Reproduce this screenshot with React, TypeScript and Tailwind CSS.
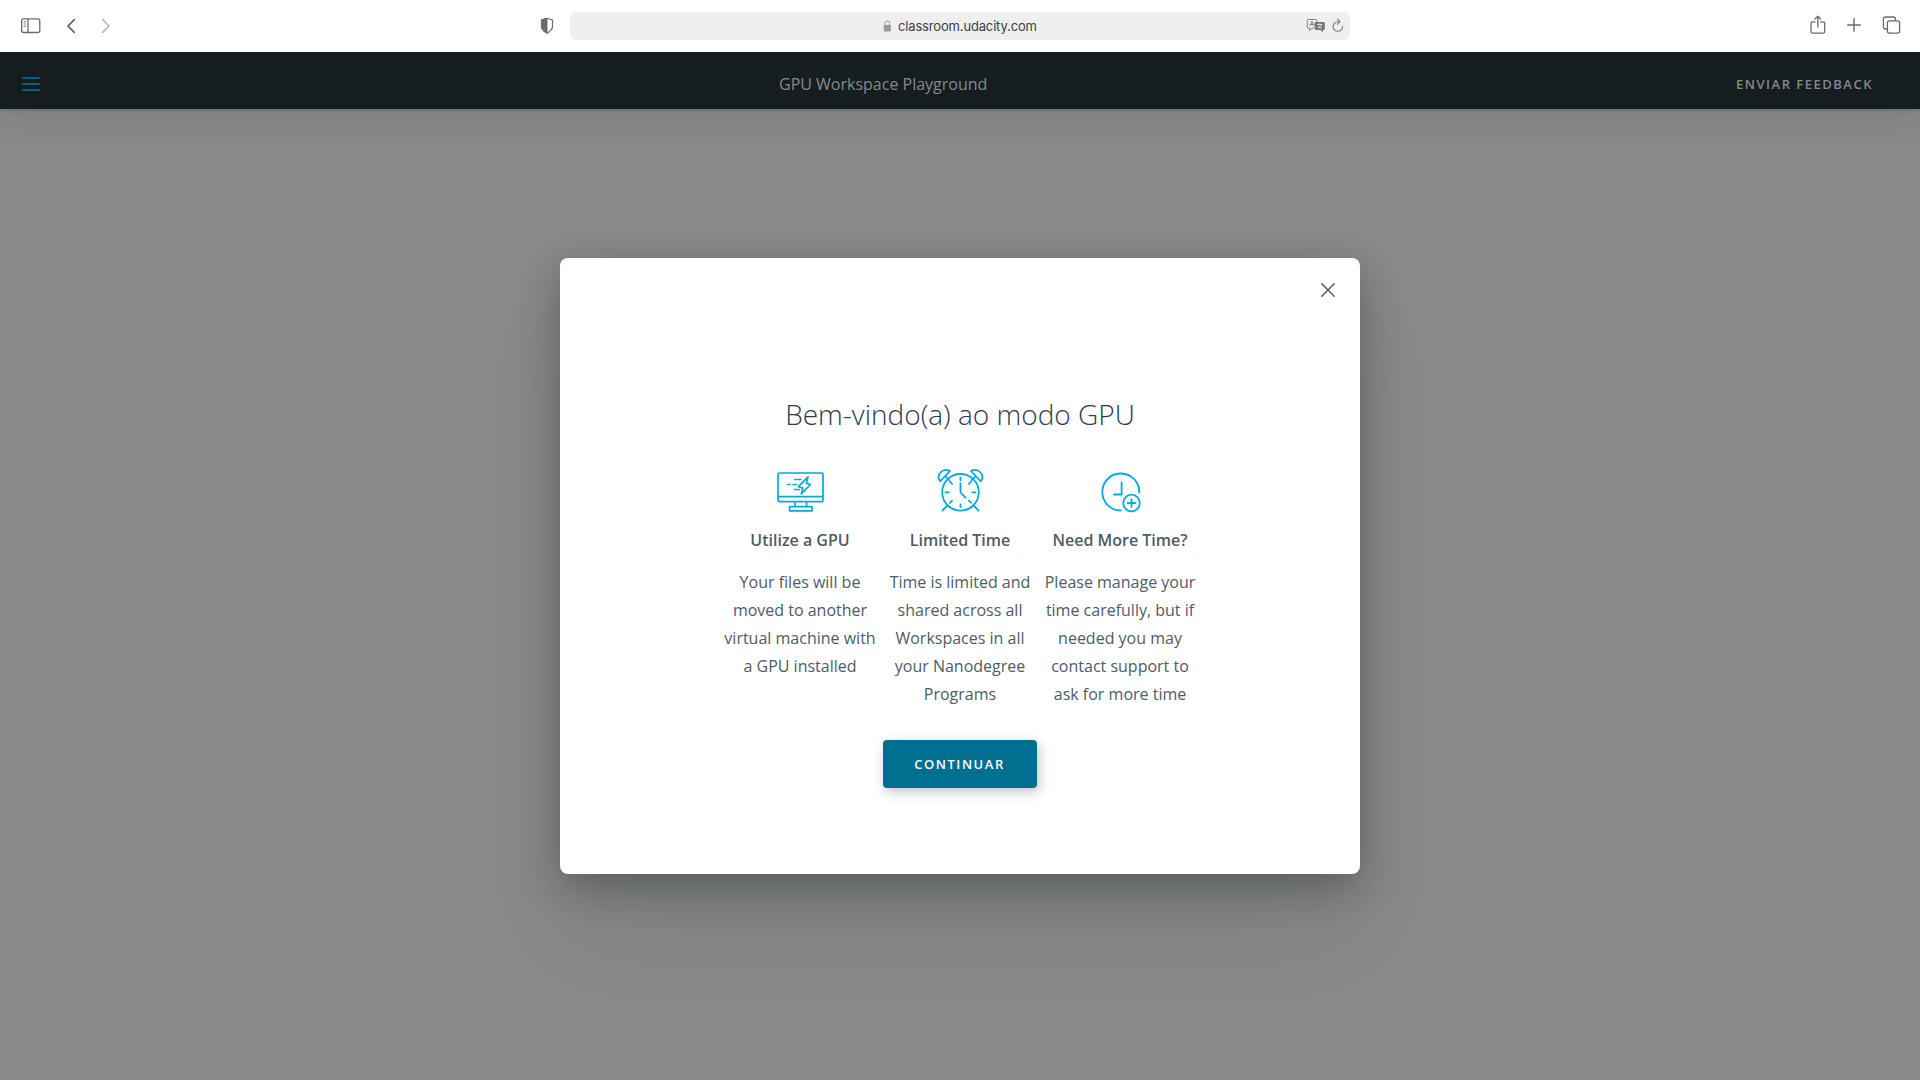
import React from "react";

const ink = "#6b6b6b";

function BrowserBar() {
  return (
    <div className="relative z-10 flex h-[52px] items-center bg-white">
      <div className="flex w-[570px] items-center">
        <svg className="ml-[21px] shrink-0" width="20" height="16" viewBox="0 0 20 16" fill="none" stroke={ink} strokeWidth="1.3">
          <rect x="0.6" y="0.8" width="18.2" height="13.7" rx="1.8" />
          <path d="M7 1v13.5" />
          <path d="M2.6 3.7h2.6M2.6 6h2.6M2.6 8.3h2.6" strokeWidth="0.9" />
        </svg>
        <svg className="ml-[25px] shrink-0" width="10" height="16" viewBox="0 0 10 16" fill="none" stroke="#5c5c5c" strokeWidth="1.6" strokeLinecap="round" strokeLinejoin="round">
          <path d="M8.3 1.6 2 8l6.3 6.4" />
        </svg>
        <svg className="ml-[25px] shrink-0" width="10" height="16" viewBox="0 0 10 16" fill="none" stroke="#b5b5b5" strokeWidth="1.6" strokeLinecap="round" strokeLinejoin="round">
          <path d="M1.7 1.6 8 8l-6.3 6.4" />
        </svg>
        <svg className="ml-auto mr-[16px] shrink-0" width="14" height="18" viewBox="0 0 14 18">
          <path d="M7 1.3 12.500 3v6.500c0 2.900-2.500 5-5.500 6.700C4 14.500 1.500 12.400 1.500 9.500V3z" fill="none" stroke={ink} strokeWidth="1.2" strokeLinejoin="round" />
          <path d="M7 1.300 1.500 3v6.500c0 2.900 2.500 5 5.500 6.700z" fill={ink} stroke={ink} strokeLinejoin="round" />
        </svg>
      </div>
      <div className="flex h-7 w-[780px] items-center rounded-md bg-[#efefef]">
        <div className="flex flex-1 items-center">
          <svg className="ml-[313px]" width="9" height="12" viewBox="0 0 9 12">
            <path d="M2 5.500V3.400a2.400 2.400 0 0 1 4.800 0v2.100" fill="none" stroke="#9a9a9a" strokeWidth="1" />
            <rect x="0.7" y="5" width="7.2" height="6.5" rx="0.9" fill="#9a9a9a" />
          </svg>
          <span className="-mt-px ml-[6px] font-['Inter'] text-[13px] leading-4 tracking-[-0.16px] text-[#404040]">classroom.udacity.com</span>
        </div>
        <svg className="mr-[6px] -mt-px shrink-0" width="20" height="16" viewBox="0 0 20 16">
          <path d="M2.400 1.500h7.200q1.200 0 1.200 1.200v2.300M8 10.200H6L3.700 12.500v-2.300H2.400q-1.200 0-1.200-1.200V2.700q0-1.200 1.200-1.200" fill="none" stroke="#7d7d7d" strokeWidth="1" />
          <path d="M3.700 8 6 3.200 8.200 8M4.500 6.500h3" fill="none" stroke="#7d7d7d" strokeWidth="1" />
          <path d="M10 4h7.500q1.300 0 1.300 1.300v5.400q0 1.300-1.300 1.300h-.6v2.500L14.500 12H10q-1.300 0-1.300-1.300V5.300Q8.700 4 10 4" fill="#757575" />
          <path d="M11.300 6.500h5M13.700 5.200v1.300M15.500 6.600c-.7 2-2.300 3.300-3.900 3.700M12.200 7.500c.9 1.600 2.300 2.600 3.800 2.800" fill="none" stroke="#efefef" strokeWidth="0.8" />
        </svg>
        <svg className="mr-[6px] -mt-[2px] shrink-0" width="12" height="15" viewBox="0 0 12 15" fill="none" stroke="#7d7d7d" strokeWidth="1.1" strokeLinecap="round" strokeLinejoin="round">
          <path d="M7.500 3.700H5.800a4.800 4.800 0 1 0 4.900 4.800M5.500 1.200l2.500 2.500-2.500 2.500" />
        </svg>
      </div>
      <div className="-mt-[2px] ml-auto mr-[19px] flex items-center">
        <svg width="16" height="20" viewBox="0 0 16 20" fill="none" stroke={ink} strokeWidth="1.3" strokeLinecap="round" strokeLinejoin="round">
          <path d="M5 6.800H2.500Q1 6.800 1 8.300v8.400q0 1.500 1.500 1.500h10.700q1.500 0 1.500-1.500V8.300q0-1.500-1.500-1.500H10.700M7.850 12V1.500M5 4l2.850-2.700L10.700 4" />
        </svg>
        <svg className="ml-[21px]" width="14" height="14" viewBox="0 0 14 14" stroke={ink} strokeWidth="1.4" strokeLinecap="round">
          <path d="M7 .7v12.600M.7 7h12.600" />
        </svg>
        <svg className="ml-[21px]" width="19" height="18" viewBox="0 0 19 18" fill="none" stroke={ink} strokeWidth="1.3" strokeLinejoin="round">
          <rect x="5.400" y="4.900" width="12.200" height="12.200" rx="2" />
          <path d="M5.200 13H3.400q-2 0-2-2V3q0-2 2-2h8q2 0 2 2v1.600" />
        </svg>
      </div>
    </div>
  );
}

function MonitorIcon() {
  return (
    <svg width="48" height="48" viewBox="0 0 48 48" fill="none" stroke="#02abdd" strokeWidth="1.7" strokeLinejoin="round">
      <rect x="2" y="5" width="45" height="28.7" rx="1.5" />
      <path d="M2 28.700H47M19 34v5M30.500 34v5M13.600 38.700h22.400v4.100H13.600z" />
      <path d="M32 8.800 22.500 18.600l4.300 1.500-1.500 5.700 9.200-9.300-4.100-1.300z" />
      <path d="M18.800 11.500h6M11.500 16.500h2.500M17 16.500h3.500M18.800 21.500h4.500" strokeLinecap="round" />
    </svg>
  );
}

function AlarmIcon() {
  return (
    <svg width="48" height="48" viewBox="0 0 48 48" fill="none" stroke="#02abdd" strokeWidth="1.8" strokeLinejoin="round" strokeLinecap="round">
      <circle cx="24.500" cy="24.300" r="18.300" />
      <path d="M4.200 13.300C-.5 7.500 6.500-1 14 3L4.200 13.300M44.800 13.300C49.500 7.500 42.500-1 35 3L44.800 13.300M9.700 8.700l3.600 3.500M39.300 8.700l-3.600 3.500M11.400 37.500l-4.900 5M37.600 37.500l4.900 5" />
      <path d="M24.500 9.500v2.800M24.500 36.300v2.800M9.500 24.300h3.200M36.300 24.300h3.200M13.900 13.700l2.200 2.200M35.100 13.700l-2.200 2.200M13.900 34.900l2.200-2.200M35.100 34.900l-2.200-2.200M24.500 15.200v9.100l5 5.300" />
    </svg>
  );
}

function MoreTimeIcon() {
  return (
    <svg width="48" height="48" viewBox="0 0 48 48" fill="none" stroke="#02abdd" strokeWidth="1.8" strokeLinecap="round">
      <path d="M43.300 24.500A18.500 18.500 0 1 0 24.800 42.500M25.600 14.500v12H18" />
      <circle cx="35.500" cy="35" r="8.300" />
      <path d="M35.500 31.200v7.600M31.700 35h7.600" />
    </svg>
  );
}

const features = [
  { title: "Utilize a GPU", icon: <MonitorIcon />, lines: ["Your files will be", "moved to another", "virtual machine with", "a GPU installed"] },
  { title: "Limited Time", icon: <AlarmIcon />, lines: ["Time is limited and", "shared across all", "Workspaces in all", "your Nanodegree", "Programs"] },
  { title: "Need More Time?", icon: <MoreTimeIcon />, lines: ["Please manage your", "time carefully, but if", "needed you may", "contact support to", "ask for more time"] },
];

function Modal() {
  return (
    <div className="relative flex h-[616px] w-[800px] flex-col items-center rounded-lg bg-white shadow-[0_12px_42px_rgba(0,15,15,0.3),0_60px_100px_rgba(0,15,15,0.09)]">
      <button className="absolute right-[25px] top-[25px]" aria-label="Fechar">
        <svg width="14" height="14" viewBox="0 0 14 14" stroke="#4f5b66" strokeWidth="1.5" strokeLinecap="round">
          <path d="M.8.8l12.400 12.400M13.200.8.8 13.200" />
        </svg>
      </button>
      <h1 className="mt-[136px] text-[28px] font-light leading-10 text-[#2e3d49]">Bem-vindo(a) ao modo GPU</h1>
      <div className="mt-[34px] flex w-[480px]">
        {features.map((f) => (
          <section key={f.title} className="flex w-40 flex-col items-center text-center text-[#4f5b66]">
            {f.icon}
            <h2 className="mt-[10px] whitespace-nowrap text-base font-semibold leading-7 text-[#4f5b66]">{f.title}</h2>
            <p className="mt-[14px] whitespace-nowrap text-base leading-7">
              {f.lines.map((l) => (
                <span key={l} className="block">{l}</span>
              ))}
            </p>
          </section>
        ))}
      </div>
      <button className="mt-[32px] h-12 w-[154px] rounded-[4px] bg-[#017090] pt-px pr-px text-[13px] font-semibold tracking-[1.55px] text-white shadow-[2px_4px_12px_rgba(46,60,73,0.3)]">
        CONTINUAR
      </button>
    </div>
  );
}

export default function App() {
  return (
    <div className="flex h-[1080px] w-[1920px] flex-col overflow-hidden bg-[#898a8c] font-['Open_Sans',sans-serif]">
      <BrowserBar />
      <header className="flex h-[57px] items-center bg-[#151d20] pt-[7px] shadow-[0_1px_3px_rgba(0,0,0,0.2),0_5px_40px_rgba(20,26,30,0.14)]">
        <div className="flex w-[779px] items-center pl-[22px]">
          <div className="flex w-[18px] flex-col gap-1">
            <span className="h-[2px] rounded bg-[#07607c]" />
            <span className="h-[2px] rounded bg-[#07607c]" />
            <span className="h-[2px] rounded bg-[#07607c]" />
          </div>
        </div>
        <div className="text-base leading-6 text-[#85898b]">GPU Workspace Playground</div>
        <div className="ml-auto mr-[47px] pt-px text-[13px] font-semibold tracking-[1.5px] text-[#85898b]">ENVIAR FEEDBACK</div>
      </header>
      <main className="flex flex-1 justify-center pt-[149px]">
        <Modal />
      </main>
    </div>
  );
}
